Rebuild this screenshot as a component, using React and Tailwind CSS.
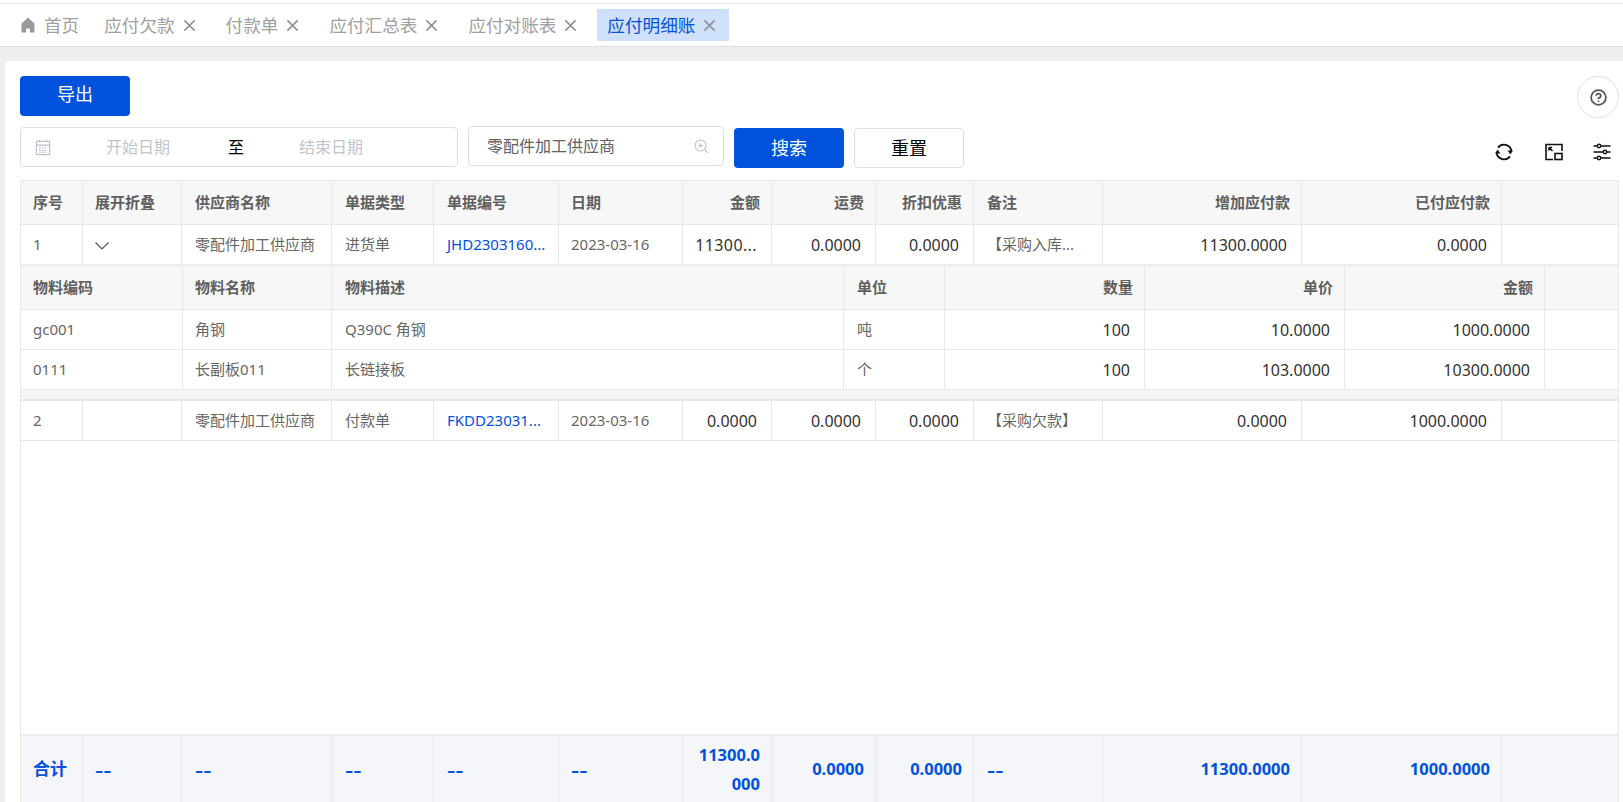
import React from "react";

const F = { fontFamily: '"Noto Sans", "Noto Sans CJK SC", sans-serif' };
const outer = "grid grid-cols-[62px_99px_150px_102px_125px_124px_89px_104px_98px_129px_199px_200px_1fr]";
const inner = "grid grid-cols-[162px_149px_512px_101px_200px_200px_200px_1fr]";

const CloseIcon = () => (
  <svg viewBox="0 0 14 14" className="w-[13px] h-[13px] ml-[8px] shrink-0" fill="none" stroke="#8e9297" strokeWidth="1.7">
    <path d="M1.5 1.5 L12.5 12.5 M12.5 1.5 L1.5 12.5" />
  </svg>
);

const tabs = ["应付欠款", "付款单", "应付汇总表", "应付对账表"];

function Tabs() {
  return (
    <div className="h-[43px] bg-white border-b border-[#dfdfe3] flex items-start pt-[5px] pl-[10px] gap-[7px] text-[17.6px] leading-[32px] text-[#a0a0a0] shrink-0">
      <div className="h-[32px] flex items-center pl-[10px] pr-[8px]">
        <svg viewBox="0 0 16 16" className="w-[16px] h-[16px] mr-[8px]" fill="#9a9a9a">
          <path d="M8 .5 14.5 6.5V15.5H9.8V11.5H6.2V15.5H1.5V6.5Z" />
        </svg>
        首页
      </div>
      {tabs.map((t) => (
        <div key={t} className="h-[32px] flex items-center pl-[10px] pr-[13px]">
          {t}
          <CloseIcon />
        </div>
      ))}
      <div className="h-[32px] flex items-center pl-[10px] pr-[13px] bg-[#cfe0fa] text-[#0052dc]">
        应付明细账
        <CloseIcon />
      </div>
    </div>
  );
}

function Toolbar() {
  return (
    <div className="flex h-[54px] items-start">
      <div className="w-[438px] h-[40px] mt-[1px] border border-[#dcdfe6] rounded-[4px] flex items-center text-[16px] text-[#c0c4cc]">
        <svg viewBox="0 0 16 18" className="ml-[14px] w-[16px] h-[17px]" fill="none" stroke="#b9c0ce" strokeWidth="1.3">
          <rect x="1" y="2.5" width="14" height="14" rx="1" />
          <path d="M1 6.5H15M4 .8V3.5M12 .8V3.5" />
          <path d="M4 9.5H12M4 12H12M4 14.2H12" strokeDasharray="1.5 1.2" />
        </svg>
        <span className="ml-[55px] w-[64px]">开始日期</span>
        <span className="ml-[58px] w-[16px] text-black">至</span>
        <span className="ml-[55px]">结束日期</span>
      </div>
      <div className="w-[256px] h-[40px] ml-[10px] border border-[#dcdfe6] rounded-[4px] flex items-center pl-[18px] text-[16px] text-[#606266]">
        <span>零配件加工供应商</span>
        <svg viewBox="0 0 16 16" className="ml-[79px] w-[15px] h-[15px]" fill="none" stroke="#c0c4cc" strokeWidth="1.2">
          <circle cx="7" cy="7" r="5.8" />
          <path d="M11.2 11.2 15 15M7 4.6V9.4M4.6 7H9.4" />
        </svg>
      </div>
      <button className="w-[110px] h-[40px] ml-[10px] mt-[2px] rounded-[4px] bg-[#0052dc] text-white text-[18px]">搜索</button>
      <button className="w-[110px] h-[40px] ml-[10px] mt-[2px] rounded-[4px] bg-white border border-[#dcdfe6] text-black text-[18px]">重置</button>
      <div className="ml-auto mt-[17px] mr-[8px] flex items-center">
        <svg viewBox="0 0 18 18" className="w-[18px] h-[18px]" fill="none" stroke="#111" strokeWidth="1.8">
          <path d="M3 4.6A7.6 7.6 0 0 1 16.4 8M15 13.4A7.6 7.6 0 0 1 1.6 10" />
          <path d="M12.6 7.4H18L15.4 11.4Z M5.4 10.6H0L2.6 6.6Z" fill="#111" stroke="none" />
        </svg>
        <svg viewBox="0 0 18 18" className="w-[18px] h-[18px] ml-[32px]" fill="none" stroke="#111" strokeWidth="1.6">
          <path d="M8 16.5H1V1.5H17V8" />
          <rect x="10" y="10.5" width="7" height="6" />
          <path d="M4 4.5 7.5 8M4 4.5H7M4 4.5V7.5" />
        </svg>
        <svg viewBox="0 0 18 18" className="w-[18px] h-[18px] ml-[30px]" fill="#fff" stroke="#111" strokeWidth="1.4">
          <path d="M.5 3H17.5M.5 9H17.5M.5 15H17.5" />
          <circle cx="6" cy="3" r="1.7" />
          <circle cx="12" cy="9" r="1.7" />
          <circle cx="6" cy="15" r="1.7" />
        </svg>
      </div>
    </div>
  );
}

const Head = ({ children, right, last, tight }) => (
  <div className={`${tight ? "pl-[12px]" : "pl-[13px]"} ${right ? "justify-end pr-[11px]" : "pr-[13px]"} ${last ? "" : "border-r"} border-[#e8e8e8] flex items-center text-[15px] font-bold text-[#5f5f5f] whitespace-nowrap`}>
    {children}
  </div>
);

const Cell = ({ children, num, link, last, tight }) => {
  const tone = num ? "justify-end pr-[14px] text-[16px] text-[#333]" : link ? "pr-[13px] text-[15px] text-[#0052dc]" : "pr-[13px] text-[15px] text-[#666]";
  return (
    <div className={`${tight ? "pl-[12px]" : "pl-[13px]"} ${last ? "" : "border-r"} border-[#e8e8e8] flex items-center whitespace-nowrap overflow-hidden ${tone}`}>
      {children}
    </div>
  );
};

const Total = ({ children, right, last, big, tight }) => (
  <div className={`${tight ? "pl-[12px]" : "pl-[13px]"} ${right ? "justify-end text-right pr-[11px]" : "pr-[13px]"} ${last ? "" : "border-r"} border-[#e6e8ee] flex items-center font-bold text-[#0052dc] ${big ? "text-[17px]" : "text-[16.5px]"}`}>
    {children}
  </div>
);

const Dash = () => <span className="text-[26px] font-normal leading-none">--</span>;

const Chevron = () => (
  <svg viewBox="0 0 14 8" className="w-[14px] h-[8px] mt-[3px]" fill="none" stroke="#555" strokeWidth="1.2">
    <path d="M.5 .5 7 7 13.5 .5" />
  </svg>
);

function DataTable() {
  return (
    <div className="flex-1 min-h-0 border border-[#e8e8e8] border-b-0 flex flex-col">
      <div className={`${outer} h-[44px] bg-[#f7f7f7] border-b border-[#e8e8e8] shrink-0`}>
        <Head tight>序号</Head>
        <Head tight>展开折叠</Head>
        <Head>供应商名称</Head>
        <Head>单据类型</Head>
        <Head>单据编号</Head>
        <Head tight>日期</Head>
        <Head right>金额</Head>
        <Head right>运费</Head>
        <Head right>折扣优惠</Head>
        <Head>备注</Head>
        <Head right>增加应付款</Head>
        <Head right>已付应付款</Head>
        <Head last />
      </div>
      <div className={`${outer} h-[41px] border-b-2 border-[#ececec] shrink-0`}>
        <Cell tight>1</Cell>
        <Cell tight><Chevron /></Cell>
        <Cell>零配件加工供应商</Cell>
        <Cell>进货单</Cell>
        <Cell link>JHD2303160...</Cell>
        <Cell tight>2023-03-16</Cell>
        <Cell num><span className="tracking-[0.4px]">11300...</span></Cell>
        <Cell num>0.0000</Cell>
        <Cell num>0.0000</Cell>
        <Cell>【采购入库...</Cell>
        <Cell num>11300.0000</Cell>
        <Cell num>0.0000</Cell>
        <Cell last />
      </div>
      <div className={`${inner} h-[44px] bg-[#f7f7f7] border-b border-[#e8e8e8] shrink-0`}>
        <Head tight>物料编码</Head>
        <Head tight>物料名称</Head>
        <Head>物料描述</Head>
        <Head>单位</Head>
        <Head right>数量</Head>
        <Head right>单价</Head>
        <Head right>金额</Head>
        <Head last />
      </div>
      <div className={`${inner} h-[40px] border-b border-[#e8e8e8] shrink-0`}>
        <Cell tight>gc001</Cell>
        <Cell tight>角钢</Cell>
        <Cell>Q390C 角钢</Cell>
        <Cell>吨</Cell>
        <Cell num>100</Cell>
        <Cell num>10.0000</Cell>
        <Cell num>1000.0000</Cell>
        <Cell last />
      </div>
      <div className={`${inner} h-[40px] border-b border-[#e8e8e8] shrink-0`}>
        <Cell tight>0111</Cell>
        <Cell tight>长副板011</Cell>
        <Cell>长链接板</Cell>
        <Cell>个</Cell>
        <Cell num>100</Cell>
        <Cell num>103.0000</Cell>
        <Cell num>10300.0000</Cell>
        <Cell last />
      </div>
      <div className="h-[11px] bg-[#f5f5f5] border-b-2 border-[#e8e8e8] shrink-0" />
      <div className={`${outer} h-[40px] border-b border-[#e8e8e8] shrink-0`}>
        <Cell tight>2</Cell>
        <Cell tight />
        <Cell>零配件加工供应商</Cell>
        <Cell>付款单</Cell>
        <Cell link>FKDD23031...</Cell>
        <Cell tight>2023-03-16</Cell>
        <Cell num>0.0000</Cell>
        <Cell num>0.0000</Cell>
        <Cell num>0.0000</Cell>
        <Cell>【采购欠款】</Cell>
        <Cell num>0.0000</Cell>
        <Cell num>1000.0000</Cell>
        <Cell last />
      </div>
      <div className="flex-1" />
      <div className={`${outer} h-[68px] bg-[#f4f6fa] border-t-2 border-[#ececec] shrink-0`}>
        <Total big tight>合计</Total>
        <Total tight><Dash /></Total>
        <Total><Dash /></Total>
        <Total><Dash /></Total>
        <Total><Dash /></Total>
        <Total tight><Dash /></Total>
        <Total right><span className="break-all leading-[29px]">11300.0000</span></Total>
        <Total right>0.0000</Total>
        <Total right>0.0000</Total>
        <Total><Dash /></Total>
        <Total right>11300.0000</Total>
        <Total right>1000.0000</Total>
        <Total last />
      </div>
    </div>
  );
}

export default function App() {
  return (
    <div style={F} className="h-[802px] overflow-hidden bg-[#eeeeee] flex flex-col">
      <div className="h-[3px] bg-white border-b border-[#e4e4e4] box-content shrink-0" />
      <Tabs />
      <div className="h-[14px] shrink-0" />
      <div className="flex-1 min-h-0 ml-[5px] bg-white rounded-tl-[4px] pl-[15px] pr-[4px] pt-[15px] flex flex-col">
        <div className="flex h-[50px] items-start justify-between">
          <button className="w-[110px] h-[40px] pb-[3px] rounded-[4px] bg-[#0052dc] text-white text-[18px]">导出</button>
          <div className="w-[42px] h-[42px] rounded-full border border-[#dfe1ea] flex items-center justify-center">
            <svg viewBox="0 0 18 18" className="w-[17px] h-[17px]" fill="none" stroke="#555" strokeWidth="1.8">
              <circle cx="9" cy="9" r="7.8" />
              <path d="M6.6 7.2A2.4 2.4 0 1 1 9 9.6V10.8M9 12.4V13.8" />
            </svg>
          </div>
        </div>
        <Toolbar />
        <DataTable />
      </div>
    </div>
  );
}
